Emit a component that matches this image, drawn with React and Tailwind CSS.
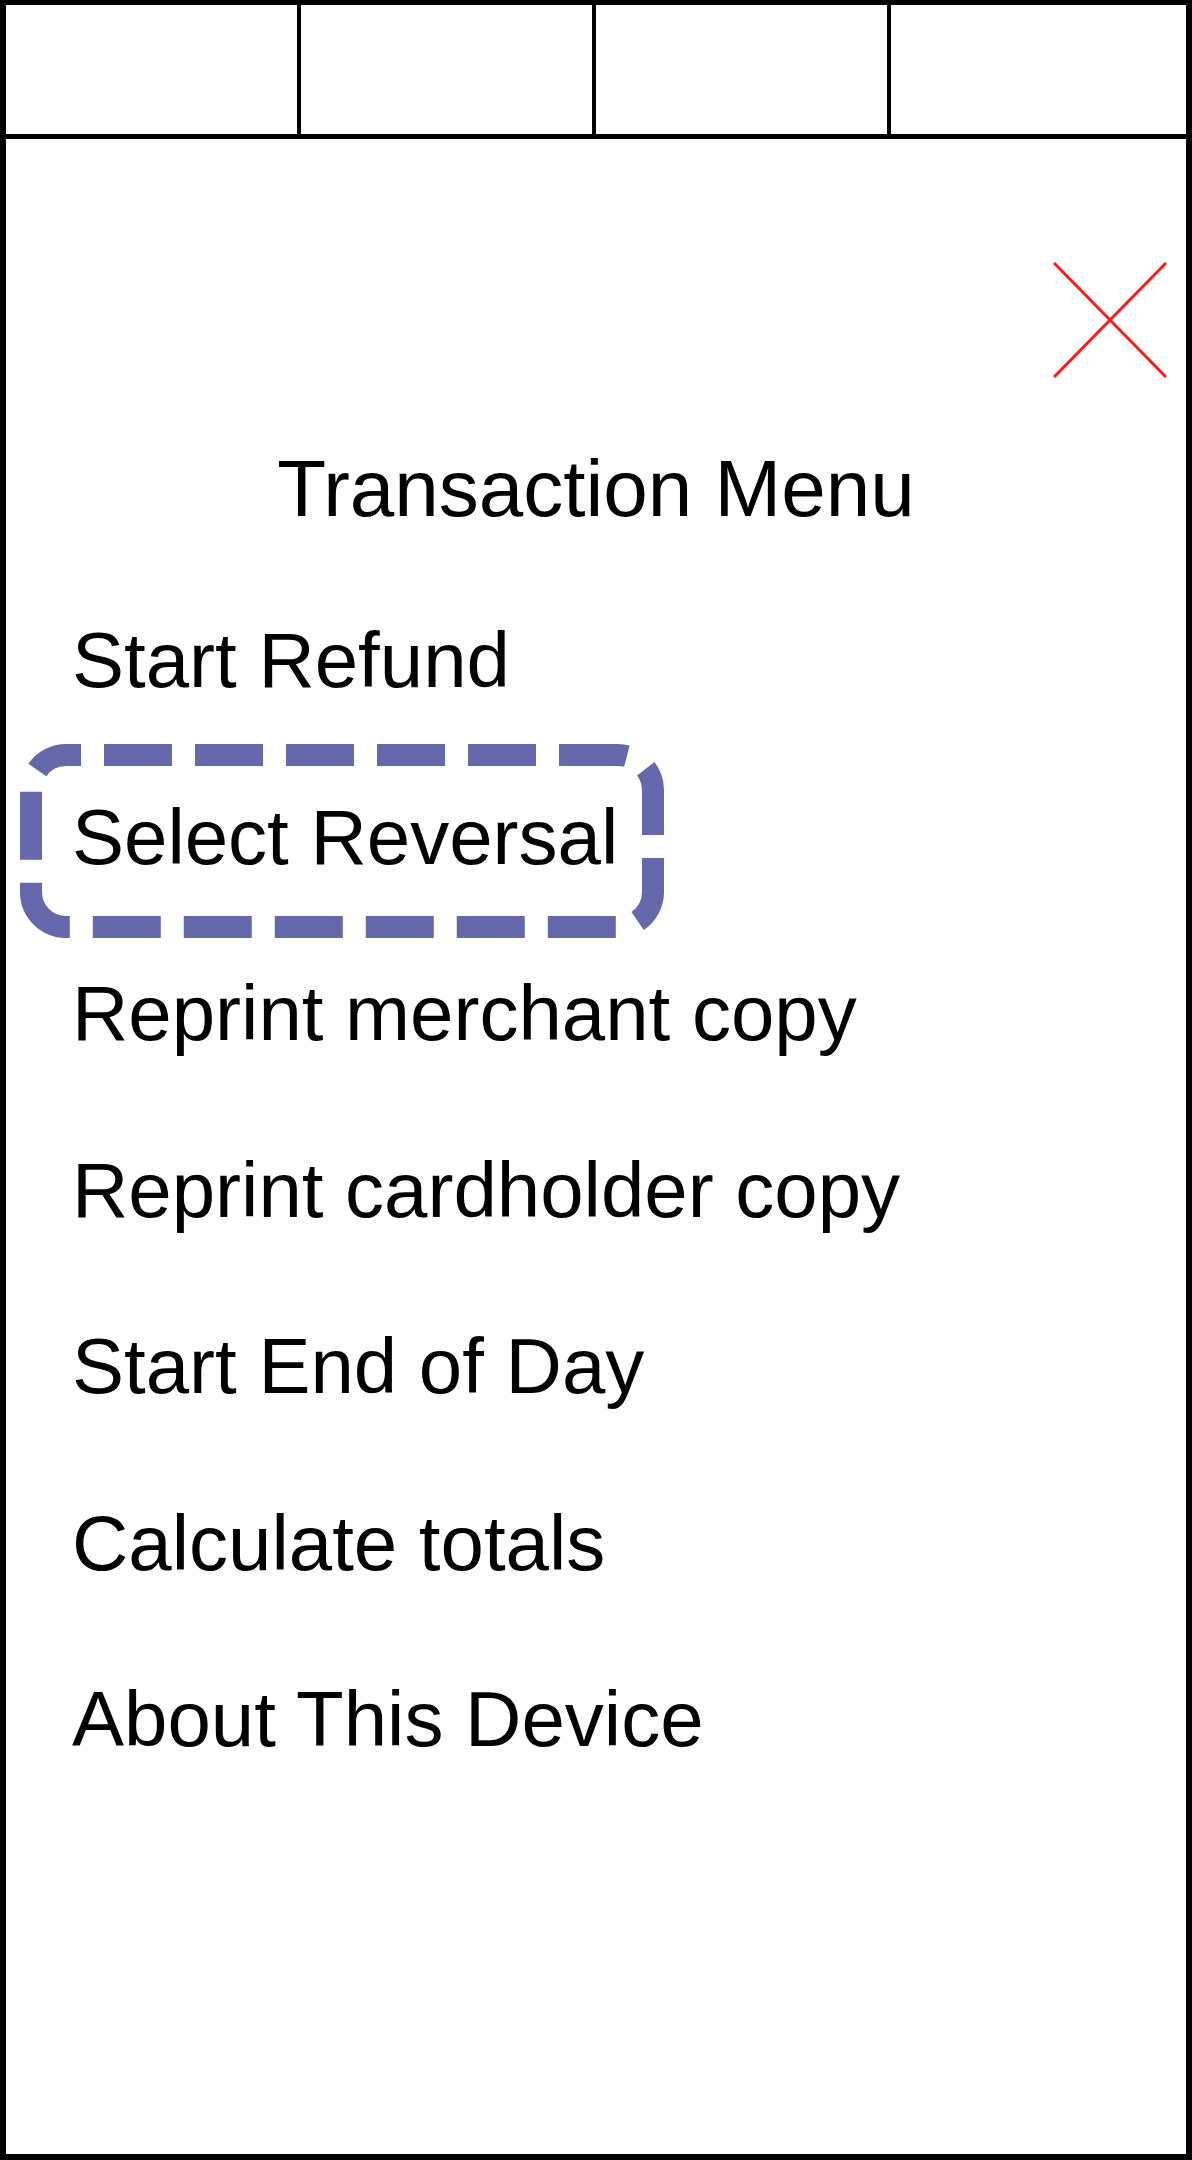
const items = [
  "Start Refund",
  "Select Reversal",
  "Reprint merchant copy",
  "Reprint cardholder copy",
  "Start End of Day",
  "Calculate totals",
  "About This Device",
];

const CloseIcon = () => (
  <svg width="114" height="116" viewBox="0 0 114 116" fill="none">
    <path d="M1 1 L113 115 M113 1 L1 115" stroke="#ff1a1a" strokeWidth="3" />
  </svg>
);

const SelectedOutline = () => (
  <svg
    className="absolute left-[14px] top-[-4.5px] pointer-events-none"
    width="644"
    height="194"
    viewBox="0 0 644 194"
    fill="none"
  >
    <rect
      x="11"
      y="11"
      width="622"
      height="172"
      rx="35"
      stroke="#6568aa"
      strokeWidth="22"
      strokeDasharray="68 23"
      strokeDashoffset="53"
    />
  </svg>
);

export default function App() {
  return (
    <div className="w-[1192px] h-[2160px] bg-white border-[6px] border-t-[5px] border-black flex flex-col font-['Liberation_Sans',Arial,sans-serif] text-black">
      {/* tab strip */}
      <div className="grid grid-cols-4 h-[134px] shrink-0 border-b-[5px] border-black">
        <div className="border-r-[4px] border-black" />
        <div className="border-r-[4px] border-black" />
        <div className="border-r-[4px] border-black" />
        <div />
      </div>

      <div className="flex justify-end pr-[19px] pt-[123px]">
        <button className="block">
          <CloseIcon />
        </button>
      </div>

      <h1 className="mt-[31px] text-center text-[80px] leading-[160px] font-normal">
        Transaction Menu
      </h1>

      <ul className="mt-[3px]">
        {items.map((item, i) => (
          <li key={i} className="relative pl-[66px] text-[78px] leading-[176.5px] whitespace-nowrap">
            {i === 1 && <SelectedOutline />}
            <span className="relative">{item}</span>
          </li>
        ))}
      </ul>
    </div>
  );
}
